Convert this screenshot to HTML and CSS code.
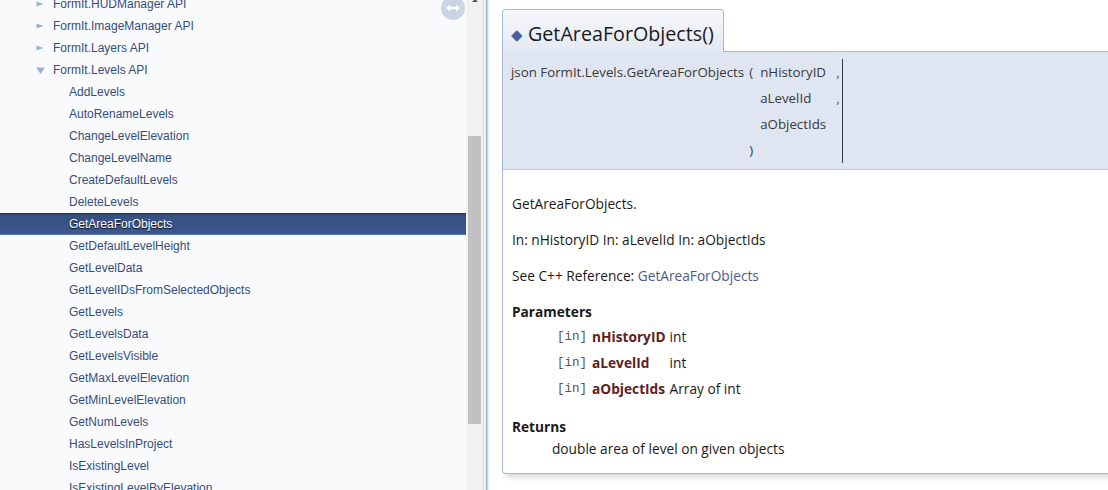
FILE: index.html
```html
<!DOCTYPE html>
<html>
<head>
<meta charset="utf-8">
<link rel="stylesheet" href="styles.css">
</head>
<body>
<div class="page">
  <nav class="side">
    <div class="tree">
      <div class="row l1"><span class="arrow"><svg width="8" height="6" viewBox="0 0 8 6"><path d="M0.5 0.5 L7.5 3 L0.5 5.5 Z" fill="#9CAFD4"/></svg></span><a>FormIt.HUDManager API</a></div>
      <div class="row l1"><span class="arrow"><svg width="8" height="6" viewBox="0 0 8 6"><path d="M0.5 0.5 L7.5 3 L0.5 5.5 Z" fill="#9CAFD4"/></svg></span><a>FormIt.ImageManager API</a></div>
      <div class="row l1"><span class="arrow"><svg width="8" height="6" viewBox="0 0 8 6"><path d="M0.5 0.5 L7.5 3 L0.5 5.5 Z" fill="#9CAFD4"/></svg></span><a>FormIt.Layers API</a></div>
      <div class="row l1"><span class="arrow"><svg width="9" height="7" viewBox="0 0 9 7"><path d="M0 0.5 L9 0.5 L4.5 7 Z" fill="#9CAFD4"/></svg></span><a>FormIt.Levels API</a></div>
      <div class="row l2"><a>AddLevels</a></div>
      <div class="row l2"><a>AutoRenameLevels</a></div>
      <div class="row l2"><a>ChangeLevelElevation</a></div>
      <div class="row l2"><a>ChangeLevelName</a></div>
      <div class="row l2"><a>CreateDefaultLevels</a></div>
      <div class="row l2"><a>DeleteLevels</a></div>
      <div class="row l2 selected"><a>GetAreaForObjects</a></div>
      <div class="row l2"><a>GetDefaultLevelHeight</a></div>
      <div class="row l2"><a>GetLevelData</a></div>
      <div class="row l2"><a>GetLevelIDsFromSelectedObjects</a></div>
      <div class="row l2"><a>GetLevels</a></div>
      <div class="row l2"><a>GetLevelsData</a></div>
      <div class="row l2"><a>GetLevelsVisible</a></div>
      <div class="row l2"><a>GetMaxLevelElevation</a></div>
      <div class="row l2"><a>GetMinLevelElevation</a></div>
      <div class="row l2"><a>GetNumLevels</a></div>
      <div class="row l2"><a>HasLevelsInProject</a></div>
      <div class="row l2"><a>IsExistingLevel</a></div>
      <div class="row l2"><a>IsExistingLevelByElevation</a></div>
    </div>
    <div class="sync" aria-hidden="true">
      <svg width="24" height="24" viewBox="0 0 24 24">
        <circle cx="12" cy="12" r="12" fill="#CBD3E7"/>
        <path d="M5 12 L9 8.5 L9 10.8 L15 10.8 L15 8.5 L19 12 L15 15.5 L15 13.2 L9 13.2 L9 15.5 Z" fill="#ffffff"/>
      </svg>
    </div>
  </nav>
  <div class="scrollbar">
    <div class="scroll-btn"></div>
    <div class="thumb"></div>
  </div>
  <div class="splitbar"></div>
  <main class="content">
    <div class="memitem">
      <h2 class="memtitle"><span class="permalink">◆</span>GetAreaForObjects()</h2>
      <div class="memproto">
        <table class="memname">
          <tr>
            <td class="fname">json FormIt.Levels.GetAreaForObjects</td>
            <td class="paren">(</td>
            <td class="pname">nHistoryID</td>
            <td class="comma">,</td>
          </tr>
          <tr>
            <td class="fname"></td>
            <td class="paren"></td>
            <td class="pname">aLevelId</td>
            <td class="comma">,</td>
          </tr>
          <tr>
            <td class="fname"></td>
            <td class="paren"></td>
            <td class="pname">aObjectIds</td>
            <td class="comma"></td>
          </tr>
          <tr>
            <td class="fname"></td>
            <td class="paren">)</td>
            <td class="pname"></td>
            <td class="comma"></td>
          </tr>
        </table>
      </div>
      <div class="memdoc">
        <p>GetAreaForObjects.</p>
        <p>In: nHistoryID In: aLevelId In: aObjectIds</p>
        <p>See C++ Reference: <a class="el">GetAreaForObjects</a></p>
        <dl class="params">
          <dt>Parameters</dt>
          <dd>
            <table class="paramtable">
              <tr><td class="paramdir">[in]</td><td class="paramname">nHistoryID</td><td class="paramtype">int</td></tr>
              <tr><td class="paramdir">[in]</td><td class="paramname">aLevelId</td><td class="paramtype">int</td></tr>
              <tr><td class="paramdir">[in]</td><td class="paramname">aObjectIds</td><td class="paramtype">Array of int</td></tr>
            </table>
          </dd>
        </dl>
        <dl class="return">
          <dt>Returns</dt>
          <dd>double area of level on given objects</dd>
        </dl>
      </div>
    </div>
  </main>
</div>
</body>
</html>
```
FILE: styles.css
```css
html, body {
  margin: 0;
  padding: 0;
  height: 100%;
  overflow: hidden;
  background: #ffffff;
}

.page {
  display: flex;
  height: 490px;
  overflow: hidden;
}

/* ---------- left navigation tree ---------- */
.side {
  position: relative;
  width: 466px;
  flex: none;
  background: #F9FAFC;
  overflow: hidden;
  font-family: "Liberation Sans", Arial, sans-serif;
  font-size: 12px;
}

.tree {
  margin-top: -7px;
}

.row {
  height: 22px;
  display: flex;
  align-items: center;
  white-space: nowrap;
}

.row a {
  color: #364D7C;
  text-decoration: none;
}

.row.l1 {
  padding-left: 36px;
}

.arrow {
  width: 17px;
  display: flex;
  align-items: center;
}

.row.l2 {
  padding-left: 69px;
}

.row.selected {
  background: linear-gradient(#1E2B45 0, #2C3F66 1px, #36507F 2px, #3D5790 100%);
  border-bottom: 1px solid #5B74A8;
  height: 21px;
}

.row.selected a {
  color: #ffffff;
  text-shadow: 0 1px 1px rgba(0, 0, 0, 0.9);
}

.sync {
  position: absolute;
  left: 441px;
  top: -4px;
  width: 24px;
  height: 24px;
}

/* ---------- scrollbar ---------- */
.scrollbar {
  width: 17px;
  flex: none;
  background: #F1F1F1;
  display: flex;
  flex-direction: column;
  align-items: center;
}

.scroll-btn {
  width: 0;
  height: 0;
  border-left: 3px solid transparent;
  border-right: 3px solid transparent;
  border-bottom: 3px solid #505050;
  margin-top: -1px;
}

.thumb {
  width: 13px;
  height: 288px;
  margin-top: 134px;
  background: #C1C1C1;
}

/* ---------- split bar ---------- */
.splitbar {
  width: 7px;
  flex: none;
  background: linear-gradient(to right,
    #D3DBEC 0, #D3DBEC 1px,
    #EEF1F8 1px, #EEF1F8 3px,
    #9DB0D6 3px, #9DB0D6 4px,
    #C9D3E9 4px, #C9D3E9 5px,
    #F3F5FA 5px, #F3F5FA 7px);
}

/* ---------- content ---------- */
.content {
  flex: 1;
  min-width: 0;
  overflow: hidden;
  padding: 9px 0 0 12px;
  font-family: "Open Sans", "Noto Sans", sans-serif;
  font-size: 13.7px;
  color: #1a1a1a;
}

.memitem {
  width: calc(100% + 40px);
}

.memtitle {
  display: inline-flex;
  align-items: center;
  box-sizing: border-box;
  width: 222px;
  height: 43px;
  margin: 0 0 -1px 0;
  padding: 4px 0 0 8px;
  border: 1px solid #A8B8D9;
  border-bottom: none;
  border-radius: 4px 4px 0 0;
  background: linear-gradient(#F7F8FC, #E3E8F2);
  font-family: "Open Sans", "Noto Sans", sans-serif;
  font-size: 19.7px;
  font-weight: normal;
  color: #1a1a1a;
  position: relative;
  z-index: 1;
}

.permalink {
  font-size: 15px;
  color: #4A62A0;
  margin-right: 5px;
  position: relative;
  top: 1px;
}

.memproto {
  background: #DFE5F1;
  border-top: 1px solid #A8B8D9;
  border-left: 1px solid #A8B8D9;
  border-bottom: 1px solid #C4C9D4;
  padding: 7px 0 6px 8px;
  box-shadow: 0 2px 2px rgba(0, 0, 0, 0.08);
  color: #3a3a3a;
  font-size: 13.3px;
}

.memname {
  border-collapse: collapse;
}

.memname td {
  height: 26px;
  padding: 0;
  white-space: nowrap;
  vertical-align: middle;
}

.memname .fname {
  padding-right: 5px;
}

.memname .paren {
  padding-right: 6px;
  width: 5px;
}

.memname .pname {
  width: 76px;
}

.memname .comma {
  width: 6px;
  color: #555;
  padding-right: 0;
  border-right: 1px solid #2E3A52;
}

.memdoc {
  border-left: 1px solid #A8B8D9;
  border-bottom: 1px solid #A8B8D9;
  border-bottom-left-radius: 4px;
  padding: 9px 10px 1px 9px;
  box-shadow: 4px 4px 5px rgba(0, 0, 0, 0.14);
  background: #ffffff;
  margin-bottom: 20px;
}

.memdoc p {
  margin: 14px 0;
  line-height: 22px;
}

.memdoc a.el {
  color: #4A5A8C;
  text-decoration: none;
}

.memdoc dl {
  margin: 14px 0;
}

.memdoc dt {
  font-weight: bold;
  line-height: 22px;
}

.memdoc dd {
  margin: 0 0 0 40px;
  line-height: 22px;
}

.paramtable {
  border-collapse: collapse;
  margin-top: 1px;
}

.paramtable td {
  height: 26px;
  padding: 0;
  vertical-align: middle;
  white-space: nowrap;
}

.paramdir {
  font-family: "Liberation Mono", monospace;
  font-size: 12.5px;
  color: #555;
  padding-left: 5px !important;
}

.paramname {
  font-weight: bold;
  color: #602020;
  padding-left: 5px !important;
  padding-right: 4px !important;
}

.memdoc dl.return {
  margin-bottom: 12px;
}
```
